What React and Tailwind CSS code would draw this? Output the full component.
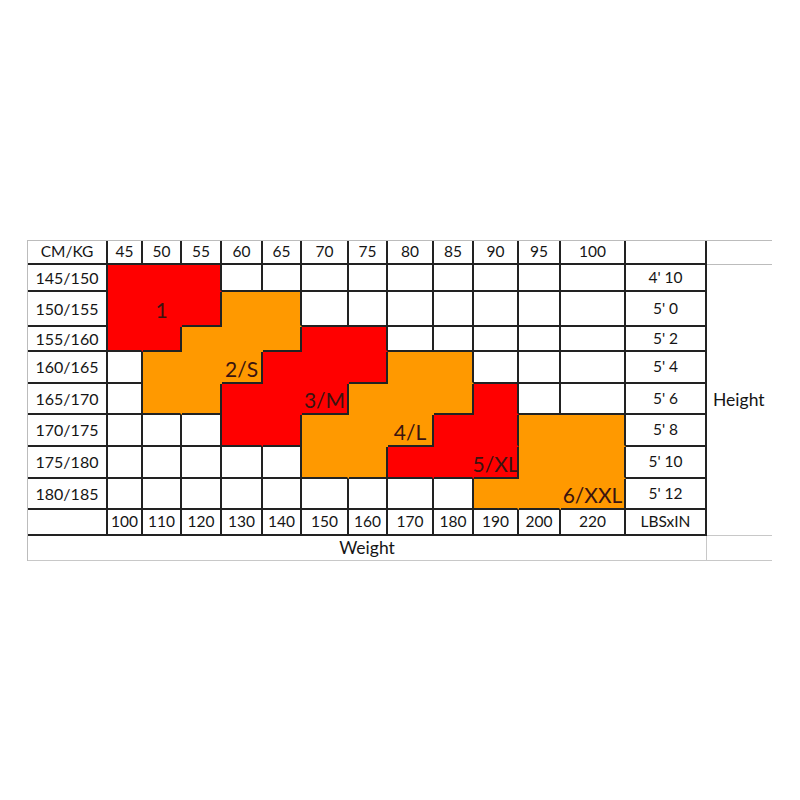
import React from "react";

const WEIGHTS_KG = ["45", "50", "55", "60", "65", "70", "75", "80", "85", "90", "95", "100"];
const WEIGHTS_LBS = ["100", "110", "120", "130", "140", "150", "160", "170", "180", "190", "200", "220"];
const HEIGHTS_CM = ["145/150", "150/155", "155/160", "160/165", "165/170", "170/175", "175/180", "180/185"];
const HEIGHTS_IN = ["4' 10", "5' 0", "5' 2", "5' 4", "5' 6", "5' 8", "5' 10", "5' 12"];

// r = red, o = orange, w = empty
const CHART = [
  "rrrwwwwwwwww",
  "rrroowwwwwww",
  "rrooorrwwwww",
  "wooorrroowww",
  "woorrrooorww",
  "wwwrrooorroo",
  "wwwwwoorrroo",
  "wwwwwwwwwooo",
];

const SIZES = {
  "1-1": "1",
  "3-3": "2/S",
  "4-5": "3/M",
  "5-7": "4/L",
  "6-9": "5/XL",
  "7-11": "6/XXL",
};

const FILL = { r: "bg-[#ff0000]", o: "bg-[#ff9900]", w: "bg-white" };
const EDGE_R = { r: "border-r-[#ff0000]", o: "border-r-[#ff9900]", x: "border-r-[#222]" };
const EDGE_B = { r: "border-b-[#ff0000]", o: "border-b-[#ff9900]", x: "border-b-[#222]" };

function edge(a, b) {
  return a === b && a !== "w" ? a : "x";
}

function ChartCell({ row, col }) {
  const c = CHART[row][col];
  const right = col < 11 ? CHART[row][col + 1] : "w";
  const below = row < 7 ? CHART[row + 1][col] : "w";
  const label = SIZES[`${row}-${col}`];
  return (
    <div
      className={`flex items-center justify-center overflow-visible whitespace-nowrap border-r-2 border-b-2 ${FILL[c]} ${EDGE_R[edge(c, right)]} ${EDGE_B[edge(c, below)]}`}
    >
      {label && <span className="relative top-[1px] text-[21px] leading-none text-[#3a1410]">{label}</span>}
    </div>
  );
}

export default function App() {
  const line = "border-r-2 border-b-2 border-[#222] flex items-center justify-center";

  return (
    <div className="w-[800px] h-[800px] bg-white pt-[240px] pl-[27px] font-['Lato',sans-serif] text-[#151515]">
      <div className="grid w-max grid-cols-[80px_35px_39px_40px_41px_39px_47px_39px_46px_40px_45px_42px_65px_81px_65px] grid-rows-[24px_27px_35px_25px_32px_31px_32px_32px_31px_26px_25px] border-t border-l border-[#bcbcbc] text-[15.5px] leading-none">
        {/* header */}
        <div className={line}>CM/KG</div>
        {WEIGHTS_KG.map((w) => (
          <div key={w} className={line}>{w}</div>
        ))}
        <div className={line} />
        <div className="border-b border-[#bcbcbc]" />

        {/* height label, spans the chart and the lbs row */}
        <div className="col-start-15 row-start-2 row-span-9 flex items-center border-b border-[#c8c8c8] pl-[6px] text-[17.5px]">
          Height
        </div>

        {/* chart rows */}
        {HEIGHTS_CM.map((h, r) => (
          <React.Fragment key={h}>
            <div className={`${line} text-[16px]`}>{h}</div>
            {WEIGHTS_KG.map((w, c) => (
              <ChartCell key={w} row={r} col={c} />
            ))}
            <div className={line}>{HEIGHTS_IN[r]}</div>
          </React.Fragment>
        ))}

        {/* lbs row */}
        <div className={line} />
        {WEIGHTS_LBS.map((w) => (
          <div key={w} className={line}>{w}</div>
        ))}
        <div className={`${line} text-[15.5px]`}>LBSxIN</div>

        {/* weight row */}
        <div className="col-span-14 flex items-center justify-center border-r border-b border-[#c8c8c8] text-[17.5px]">Weight</div>
        <div className="border-b border-[#c8c8c8]" />
      </div>
    </div>
  );
}
